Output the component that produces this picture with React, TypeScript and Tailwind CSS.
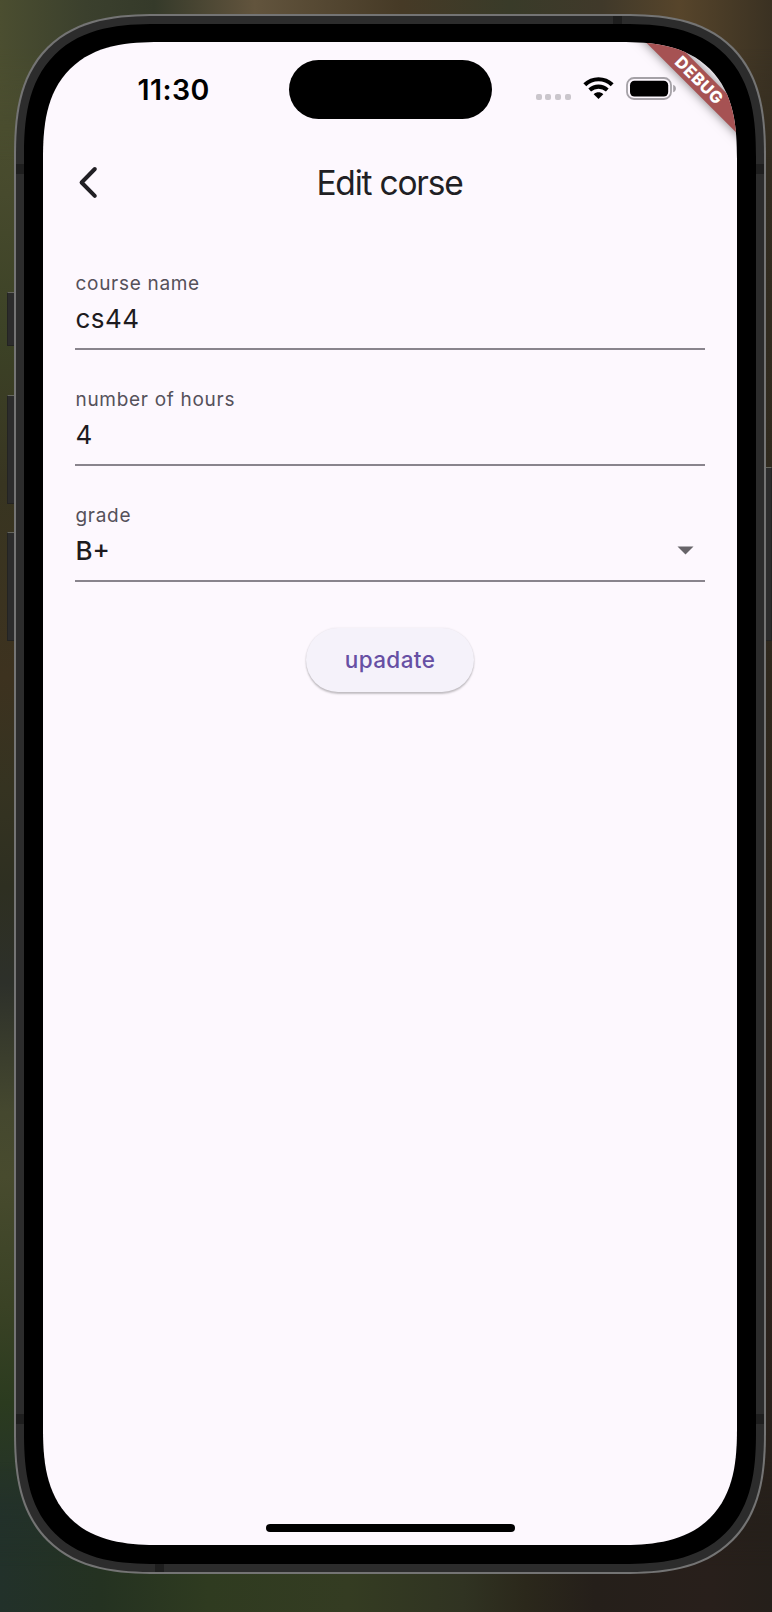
import React from "react";

function Field({ label, value, medium, children }: { label: string; value: string; medium?: boolean; children?: React.ReactNode }) {
  return (
    <div className="flex h-[116px] flex-col">
      <div className="h-[29px] pl-[0.5px] text-[19px] leading-[29px] tracking-[0.7px] text-[#55515a]">{label}</div>
      <div className="mt-[3px] flex h-[36px] items-center justify-between pl-[0.5px]">
        <span className={medium ? "text-[26px] font-medium leading-[36px] tracking-[0px] text-[#1d1b20]" : "text-[26px] leading-[36px] tracking-[0.5px] text-[#1d1b20]"}>{value}</span>
        {children}
      </div>
      <div className="mt-[11px] h-[2px] bg-[#89848d]" />
    </div>
  );
}

function Notch({ className }: { className: string }) {
  return <div className={"absolute bg-[#1e1e1e] " + className} />;
}

function SideButton({ className }: { className: string }) {
  return <div className={"absolute border border-[#232322] border-t-[#65665e] bg-[#2c2c2c] " + className} />;
}

function StatusBar() {
  return (
    <div className="relative flex h-[92px] w-full">
      <div className="ml-[94.5px] mt-[28.5px] font-[Inter] text-[28.5px] font-semibold leading-[38px] tracking-[0.4px] text-black">11:30</div>
      <div className="absolute left-[245.5px] top-[17.7px] h-[59.5px] w-[203px] rounded-full bg-black" />
      <div className="absolute left-[492.7px] top-[51.5px] flex gap-[3.7px]">
        <i className="size-[6px] rounded-[2px] bg-[#cac6cc]" />
        <i className="size-[6px] rounded-[2px] bg-[#cac6cc]" />
        <i className="size-[6px] rounded-[2px] bg-[#cac6cc]" />
        <i className="size-[6px] rounded-[2px] bg-[#cac6cc]" />
      </div>
      <svg className="absolute left-[540px] top-[35px]" width="31" height="22" viewBox="0 0 31 22">
        <path d="M1.8 7.7C9.5.4 21.5.4 29.2 7.7" fill="none" stroke="#000" strokeWidth="4.2" />
        <path d="M6.7 13C11.8 8.5 19.2 8.5 24.3 13" fill="none" stroke="#000" strokeWidth="4.1" />
        <path d="M10.7 17.2C13.5 14.7 17.5 14.7 20.3 17.2L15.5 22Z" fill="#000" />
      </svg>
      <svg className="absolute left-[583px] top-[35px]" width="51" height="23" viewBox="0 0 51 23">
        <rect x="1" y="1" width="44" height="21" rx="7" fill="none" stroke="#a5a1a7" strokeWidth="1.8" />
        <rect x="4" y="3.7" width="38.2" height="15.8" rx="4.5" fill="#000" />
        <path d="M47.2 7.7C50.8 9 50.8 14 47.2 15.3Z" fill="#a5a1a7" />
      </svg>
    </div>
  );
}

export default function App() {
  return (
    <div className="relative h-[1612px] w-[772px] overflow-hidden bg-[#34301f] p-[14px] font-[Inter]">
      <div className="absolute left-0 top-0 h-[1612px] w-[386px] bg-[linear-gradient(180deg,#4b4e30_0%,#4a4d2e_8%,#474a2d_12%,#3c4226_21%,#383521_30%,#3d321f_42%,#353321_49%,#2e2f21_55%,#2d302a_61%,#45482f_69%,#484b2e_73%,#3a4225_81%,#2b3b1f_87%,#23312a_94%,#223128_100%)]" />
      <div className="absolute right-0 top-0 h-[1612px] w-[386px] bg-[linear-gradient(180deg,#3a3122_0%,#322c20_10%,#302a1e_30%,#2e261c_55%,#2c221c_75%,#28211b_90%,#241f1a_100%)]" />
      <div className="absolute inset-x-0 top-0 h-[160px] bg-[linear-gradient(90deg,#4b4e30_0%,#3b402d_11%,#353a2a_20%,#514a36_28%,#62543d_33%,#463a26_52%,#393b29_66%,#40392a_78%,#57452b_88%,#3a3122_100%)] [mask-image:linear-gradient(180deg,#000_30%,transparent)]" />
      <div className="absolute inset-x-0 bottom-0 h-[150px] bg-[linear-gradient(90deg,#22312a_0%,#243221_13%,#2f3b20_27%,#343c22_45%,#303322_60%,#2b281b_68%,#251f1a_77%,#281f1b_92%,#251f1a_100%)] [mask-image:linear-gradient(0deg,#000_30%,transparent)]" />

      <SideButton className="left-[7px] top-[292px] h-[54px] w-[12px]" />
      <SideButton className="left-[7px] top-[395px] h-[109px] w-[12px]" />
      <SideButton className="left-[7px] top-[532px] h-[109px] w-[12px]" />
      <SideButton className="left-[760px] top-[467px] h-[174px] w-[12px]" />

      <div className="relative h-[1560px] w-[752px] rounded-[105px] bg-[#747474] p-[2px] supports-[corner-shape:squircle]:rounded-[143px] supports-[corner-shape:squircle]:[corner-shape:superellipse(1.4)]">
        <div className="relative h-full w-full rounded-[103px] bg-[#2c2c2c] p-[8px] supports-[corner-shape:squircle]:rounded-[141px] supports-[corner-shape:squircle]:[corner-shape:superellipse(1.4)]">
          <Notch className="left-0 top-[148px] h-[10px] w-[8px]" />
          <Notch className="right-0 top-[148px] h-[10px] w-[8px]" />
          <Notch className="left-0 top-[1398px] h-[10px] w-[8px]" />
          <Notch className="right-0 top-[1398px] h-[10px] w-[8px]" />
          <Notch className="left-[597px] top-0 h-[8px] w-[9px]" />
          <Notch className="bottom-0 left-[139px] h-[8px] w-[9px]" />
          <div className="relative h-full w-full rounded-[95px] bg-black px-[19px] pb-[19px] pt-[18px] supports-[corner-shape:squircle]:rounded-[133px] supports-[corner-shape:squircle]:[corner-shape:superellipse(1.4)]">
            <main className="relative flex h-full w-full flex-col overflow-hidden rounded-[80px] bg-[#fdf8fe] supports-[corner-shape:squircle]:rounded-[117px] supports-[corner-shape:squircle]:[corner-shape:superellipse(1.4)]">
              <StatusBar />
              <header className="relative flex h-[98px] items-center justify-center">
                <svg className="absolute left-[35px] top-[32px]" width="21" height="34" viewBox="0 0 21 34" fill="none" stroke="#211f24" strokeWidth="4" strokeLinecap="round" strokeLinejoin="round">
                  <path d="M16.8 3L3.6 16.5L16.8 29.8" />
                </svg>
                <h1 className="pr-[1px] text-[33.5px] font-normal leading-[44px] tracking-[-1.2px] text-[#211f24]">Edit corse</h1>
              </header>
              <form className="mx-[32px] mt-[37px] flex flex-col">
                <Field label="course name" value="cs44" />
                <Field label="number of hours" value="4" />
                <Field label="grade" value="B+" medium>
                  <svg className="mb-[2px] mr-[11px]" width="17" height="9" viewBox="0 0 17 9">
                    <path d="M.5.5H16.5L8.5 8.5Z" fill="#676469" />
                  </svg>
                </Field>
              </form>
              <button type="button" className="mx-auto mt-[11px] h-[64px] w-[168px] rounded-full bg-[#f5f2fa] text-[22.5px] font-medium tracking-[0.4px] text-[#6750a4] shadow-[0_2px_2px_rgba(0,0,0,0.22),0_0_2px_rgba(0,0,0,0.10)]">upadate</button>
              <div className="absolute right-[-71.5px] top-[27.5px] flex h-[21px] w-[220px] rotate-45 items-center justify-center bg-[#a65253] text-[16.5px] font-extrabold tracking-[0.6px] text-white shadow-[0_0_11px_rgba(0,0,0,0.5)]">DEBUG</div>
              <div className="mx-auto mb-[13px] mt-auto h-[8px] w-[249px] rounded-full bg-black" />
            </main>
          </div>
        </div>
      </div>
    </div>
  );
}
